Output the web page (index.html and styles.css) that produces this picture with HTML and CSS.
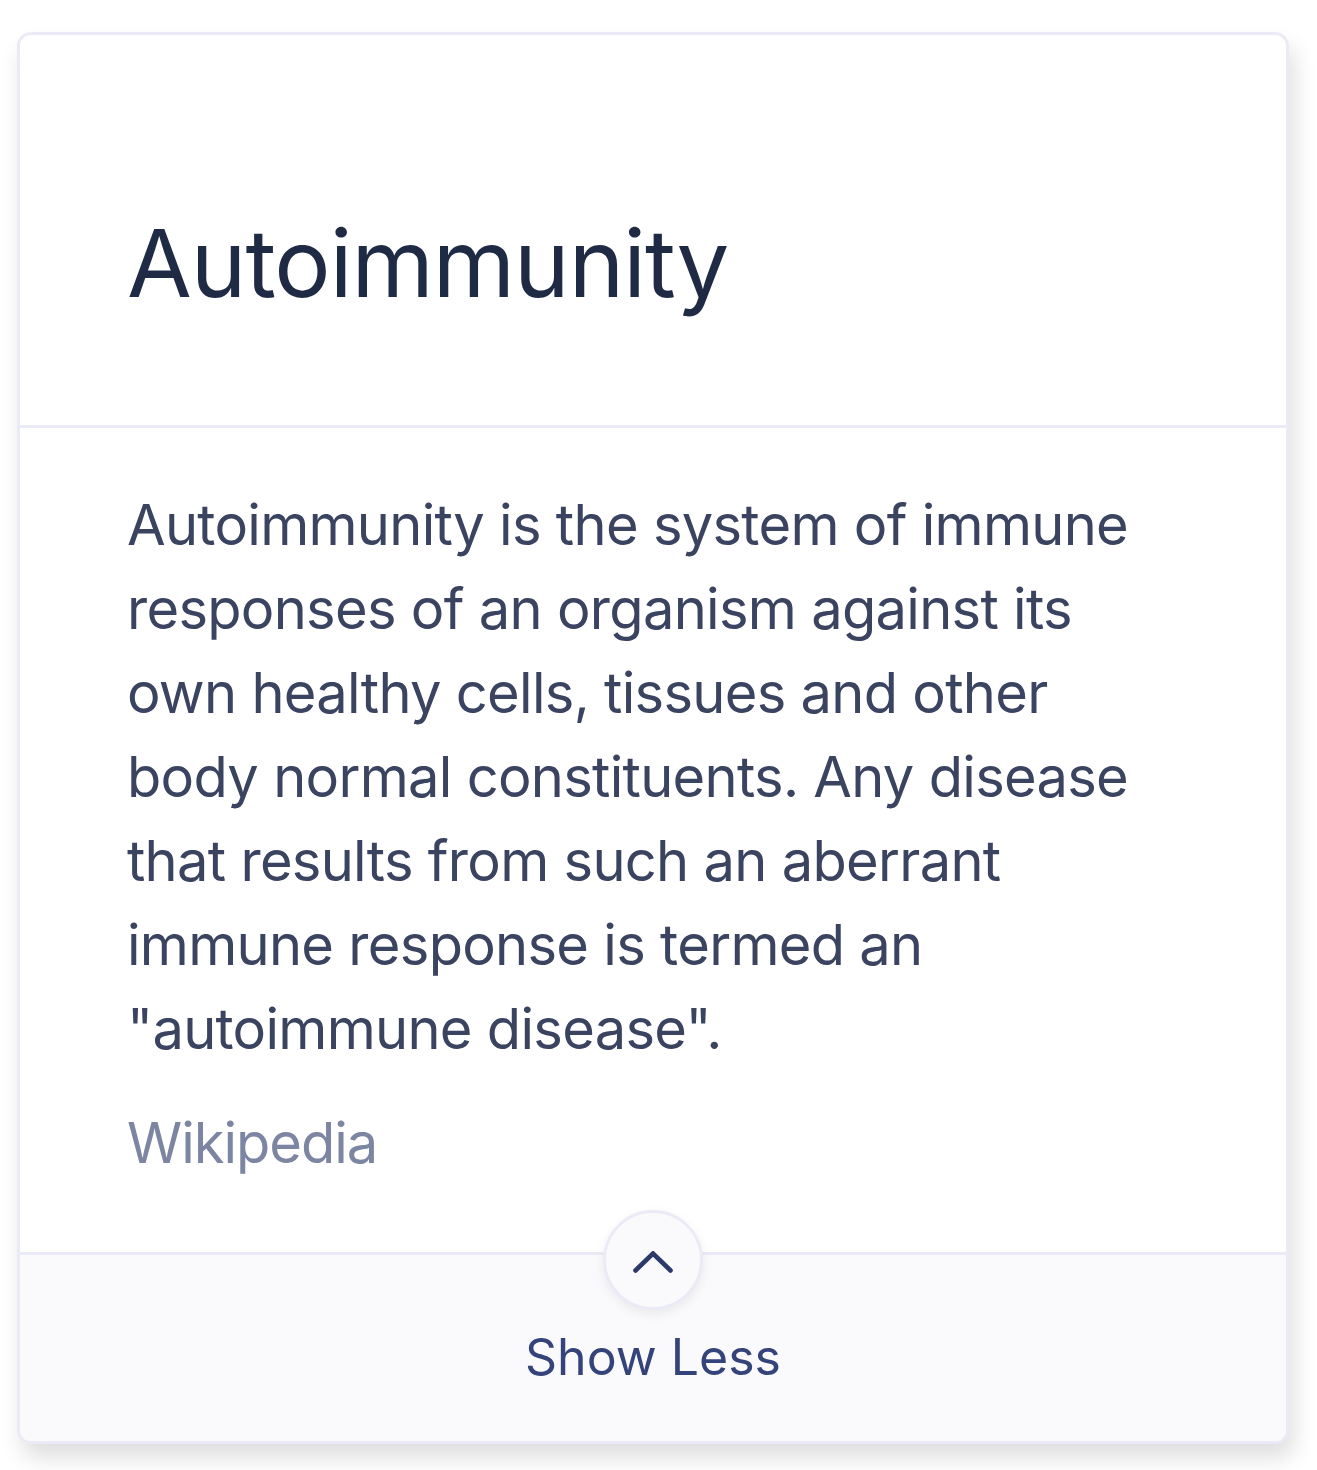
FILE: index.html
```html
<!DOCTYPE html>
<html lang="en">
<head>
<meta charset="utf-8">
<title>Autoimmunity</title>
<link rel="stylesheet" href="styles.css">
</head>
<body>
<div class="card">
  <div class="card-header">
    <h1 class="title">Autoimmunity</h1>
  </div>
  <div class="card-body">
    <p class="text">Autoimmunity is the system of immune responses of an organism against its own healthy cells, tissues and other body normal constituents. Any disease that results from such an aberrant immune response is termed an "autoimmune disease".</p>
    <div class="source">Wikipedia</div>
  </div>
  <div class="card-footer">
    <button class="toggle" type="button" aria-label="Show less">
      <svg width="40" height="22" viewBox="0 0 40 22"><polyline points="2.5,19.5 20,2.5 37.5,19.5" fill="none" stroke="#2c3a6b" stroke-width="4.6" stroke-linecap="round" stroke-linejoin="miter"/></svg>
    </button>
    <div class="footer-label">Show Less</div>
  </div>
</div>
</body>
</html>
```
FILE: styles.css
```css
* { box-sizing: border-box; }
html, body { margin: 0; padding: 0; background: #ffffff; }
body {
  font-family: Inter, "Noto Sans", sans-serif;
  padding: 32px 0 0 17px;
  min-height: 1470px;
}
.card {
  width: 1272px;
  height: 1412px;
  border: 3px solid #ebebf8;
  border-radius: 14px;
  background: #ffffff;
  box-shadow: 5px 14px 22px rgba(0, 0, 0, 0.13);
  display: flex;
  flex-direction: column;
  overflow: hidden;
}
.card-header {
  padding: 180px 107px 0 107px;
  height: 393px;
  border-bottom: 3px solid #ebebf8;
}
.title {
  margin: 0;
  font-size: 94px;
  line-height: 96px;
  font-weight: 400;
  letter-spacing: -1px;
  color: #1f2a44;
}
.card-body {
  padding: 55px 124px 0 107px;
  height: 824px;
}
.text {
  margin: 0;
  font-size: 56px;
  line-height: 84px;
  letter-spacing: -0.7px;
  color: #3a4360;
}
.source {
  margin-top: 30px;
  font-size: 56px;
  line-height: 84px;
  letter-spacing: -1px;
  color: #7c85a1;
}
.card-footer {
  flex: 1;
  border-top: 3px solid #ebebf8;
  background: #fafafd;
  display: flex;
  flex-direction: column;
  align-items: center;
}
.toggle {
  margin-top: -45px;
  width: 100px;
  height: 100px;
  border-radius: 50%;
  border: 3px solid #ebebf8;
  background: #fafafd;
  box-shadow: 0 4px 12px rgba(0, 0, 0, 0.07);
  display: flex;
  align-items: center;
  justify-content: center;
  padding: 4px 0 0 0;
  cursor: pointer;
}
.footer-label {
  margin-top: 17px;
  font-size: 50px;
  line-height: 60px;
  color: #34447a;
}
```
